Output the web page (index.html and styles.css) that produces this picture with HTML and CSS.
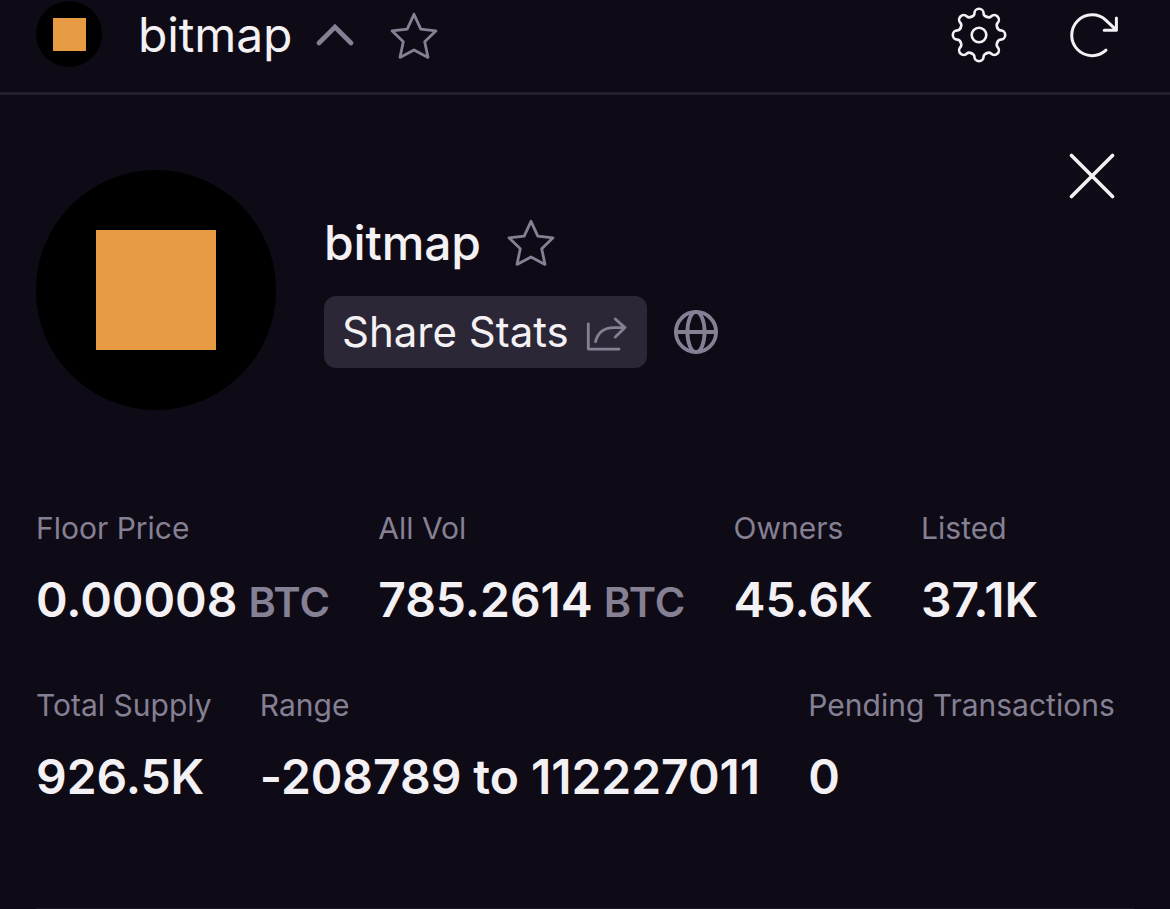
FILE: index.html
```
<!DOCTYPE html>
<html lang="en">
<head>
    <meta charset="utf-8">
    <title>bitmap</title>
    <link rel="stylesheet" href="styles.css">
</head>
<body>
    <header class="topbar">
        <div class="avatar avatar-small"><div class="block"></div></div>
        <span class="topbar-name">bitmap</span>
        <svg class="chevron" width="38" height="24" viewBox="0 0 38 24"><path d="M3 20 19 4 35 20"/></svg>
        <svg class="star" width="48" height="48" viewBox="0 0 48 48"><path d="M24 2.3 30.8 17.1 46 18.8 34.7 29.7 38 45.4 24 38 10 45.4 13.3 29.7 2 18.8 17.2 17.1Z"/></svg>
        <div class="topbar-actions">
            <svg class="gear" width="56" height="56" viewBox="-28 -28 56 56">
                <defs>
                    <path id="tooth" d="M-7.54-18.2C-5.9-18.9-4.6-19.8-4.6-21.6A4.6 4.6 0 0 1 4.6-21.6C4.6-19.8 5.9-18.9 7.54-18.2"/>
                </defs>
                <use href="#tooth"/>
                <use href="#tooth" transform="rotate(45)"/>
                <use href="#tooth" transform="rotate(90)"/>
                <use href="#tooth" transform="rotate(135)"/>
                <use href="#tooth" transform="rotate(180)"/>
                <use href="#tooth" transform="rotate(225)"/>
                <use href="#tooth" transform="rotate(270)"/>
                <use href="#tooth" transform="rotate(315)"/>
                <circle r="7.3"/>
            </svg>
            <svg class="refresh" width="52" height="48" viewBox="0 0 52 48"><path d="M38 39.2A20.4 20.4 0 1 1 38 9.3L48.2 18.8M48.4 7V19.2H36.2"/></svg>
        </div>
    </header>

    <main class="panel">
        <section class="profile">
            <div class="avatar avatar-large"><div class="block"></div></div>
            <div class="profile-info">
                <div class="profile-title">
                    <h1>bitmap</h1>
                    <svg class="star" width="48" height="48" viewBox="0 0 48 48"><path d="M24 2.3 30.8 17.1 46 18.8 34.7 29.7 38 45.4 24 38 10 45.4 13.3 29.7 2 18.8 17.2 17.1Z"/></svg>
                </div>
                <div class="profile-links">
                    <button class="share">
                        <span>Share Stats</span>
                        <svg width="42" height="36" viewBox="0 0 42 36"><path d="M3.3 8V33.1H34M10.5 25.7C13 15.5 19.5 11.6 29 11.6H40M30.3 3 40 11.6 30.3 21"/></svg>
                    </button>
                    <svg class="globe" width="44" height="44" viewBox="0 0 44 44"><circle cx="22" cy="22" r="20.1"/><ellipse cx="22" cy="22" rx="8.6" ry="20.1"/><path d="M2 22H42"/></svg>
                </div>
            </div>
            <button class="close" aria-label="Close">
                <svg width="46" height="46" viewBox="0 0 46 46"><path d="M2.5 2.5 43.5 43.5M43.5 2.5 2.5 43.5"/></svg>
            </button>
        </section>

        <section class="stats">
            <div class="stat">
                <div class="label">Floor Price</div>
                <div class="value">0.00008 <span class="unit">BTC</span></div>
            </div>
            <div class="stat">
                <div class="label">All Vol</div>
                <div class="value">785.2614 <span class="unit">BTC</span></div>
            </div>
            <div class="stat">
                <div class="label">Owners</div>
                <div class="value">45.6K</div>
            </div>
            <div class="stat">
                <div class="label">Listed</div>
                <div class="value">37.1K</div>
            </div>
            <div class="stat">
                <div class="label">Total Supply</div>
                <div class="value">926.5K</div>
            </div>
            <div class="stat">
                <div class="label">Range</div>
                <div class="value">-208789 to 112227011</div>
            </div>
            <div class="stat">
                <div class="label">Pending Transactions</div>
                <div class="value">0</div>
            </div>
        </section>
    </main>
    <hr class="divider">
</body>
</html>
```
FILE: styles.css
```
* {
    box-sizing: border-box;
}
body {
    margin: 0;
    height: 909px;
    display: flex;
    flex-direction: column;
    background-color: #0f0b16;
    color: #f4f1f4;
    font-family: Inter, "Liberation Sans", sans-serif;
}
svg {
    display: block;
    flex: none;
    fill: none;
    stroke: #f4f1f4;
    stroke-width: 3;
    stroke-linecap: round;
    stroke-linejoin: round;
}
button {
    border: none;
    padding: 0;
    background: none;
    color: inherit;
    font: inherit;
    cursor: pointer;
}

/* top bar */
.topbar {
    height: 95px;
    flex: none;
    display: flex;
    align-items: center;
    padding: 0 50px 24px 36px;
    border-bottom: 3px solid #231f2e;
}
.topbar-name {
    margin-left: 36px;
    margin-top: 2px;
    width: 155px;
    font-size: 48px;
    line-height: 60px;
    letter-spacing: -0.15px;
    white-space: nowrap;
}
.chevron {
    margin-left: 23px;
    margin-top: 2px;
    stroke: #858093;
    stroke-width: 4.6;
    stroke-linejoin: miter;
}
.star {
    stroke: #858093;
    stroke-width: 2.8;
}
.topbar .star {
    margin-left: 36px;
    margin-top: 4px;
}
.topbar-actions {
    margin-left: auto;
    margin-top: 2px;
    display: flex;
    align-items: center;
    gap: 61.5px;
}
.gear {
    stroke-width: 2.6;
}

/* collection avatar */
.avatar {
    flex: none;
    display: flex;
    align-items: center;
    justify-content: center;
    border-radius: 50%;
    background-color: #000;
}
.avatar .block {
    width: 50%;
    height: 50%;
    background-color: #e79b42;
}
.avatar-small {
    width: 66px;
    height: 66px;
}
.avatar-large {
    width: 240px;
    height: 240px;
}

/* panel */
.panel {
    flex: 1;
    padding: 75px 0 0 36px;
}
.profile {
    display: flex;
    align-items: center;
    height: 240px;
}
.profile-info {
    margin-left: 48px;
    margin-top: 1px;
}
.profile-title {
    display: flex;
    align-items: center;
    gap: 27px;
    height: 60px;
}
.profile-title h1 {
    margin: 0;
    width: 156px;
    font-size: 48px;
    font-weight: 500;
    line-height: 60px;
    letter-spacing: -0.15px;
    white-space: nowrap;
}
.profile-links {
    display: flex;
    align-items: center;
    gap: 27px;
    margin-top: 23px;
}
.share {
    display: flex;
    align-items: center;
    justify-content: space-between;
    width: 323px;
    height: 72px;
    padding: 0 20px 1px 18px;
    border-radius: 12px;
    background-color: #2c2736;
    font-size: 42px;
    white-space: nowrap;
}
.share svg {
    margin-top: 4px;
    stroke: #858093;
    stroke-width: 2.8;
}
.globe {
    stroke: #858093;
    stroke-width: 3.8;
}
.close {
    align-self: flex-start;
    margin-left: auto;
    margin-right: 55px;
    margin-top: -17px;
}
.close svg {
    stroke-width: 3.6;
}

/* stats */
.stats {
    display: flex;
    flex-wrap: wrap;
    gap: 51px 48.3px;
    margin-top: 97px;
    margin-right: 36px;
}
.label {
    font-size: 30px;
    line-height: 42px;
    color: #858093;
    white-space: nowrap;
}
.value {
    margin-top: 18px;
    font-size: 48px;
    font-weight: 600;
    line-height: 66px;
    letter-spacing: -0.05px;
    white-space: nowrap;
}
.unit {
    margin-left: -1px;
    font-size: 41.5px;
    line-height: 1;
    color: #858093;
}

.divider {
    flex: none;
    width: 1098px;
    height: 1px;
    margin: 0 36px;
    border: none;
    background-color: #1d1825;
}
```
